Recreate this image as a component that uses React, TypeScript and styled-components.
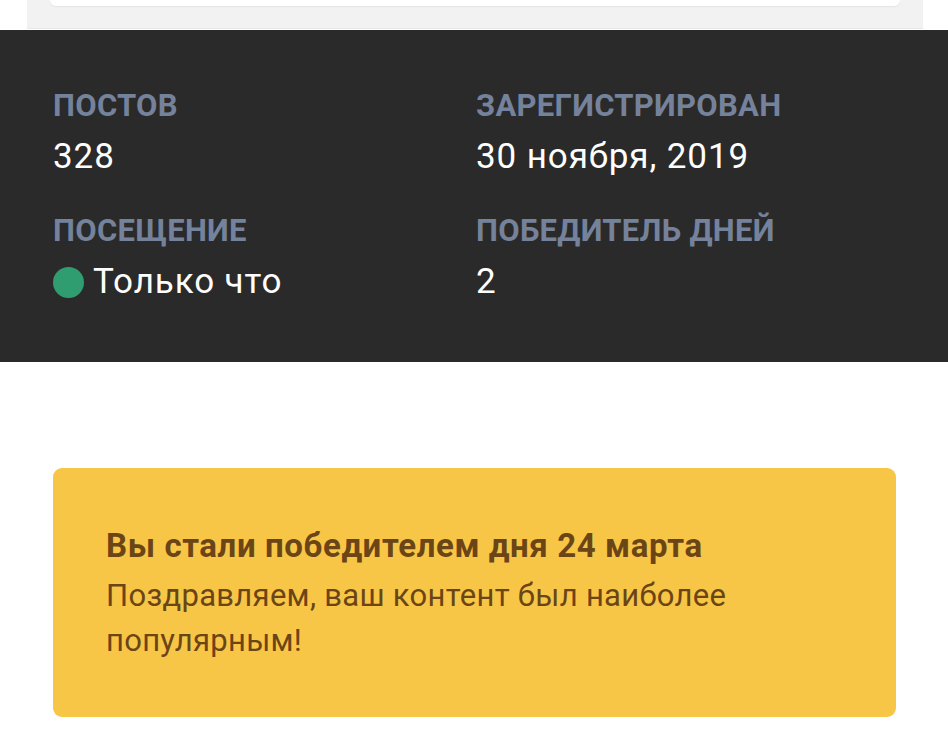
import styled, { createGlobalStyle } from 'styled-components';

const GlobalStyle = createGlobalStyle`
    html, body {
        margin: 0;
        padding: 0;
        background: #ffffff;
        font-family: Roboto, "Noto Sans", "Liberation Sans", sans-serif;
    }
`;

type Stat = { label: string; value: string; online?: boolean };

const stats: Stat[] = [
    { label: 'Постов', value: '328' },
    { label: 'Зарегистрирован', value: '30 ноября, 2019' },
    { label: 'Посещение', value: 'Только что', online: true },
    { label: 'Победитель дней', value: '2' },
];

const App = () => {
    return (
        <Page>
            <GlobalStyle />
            <TopPanel>
                <TopCard />
            </TopPanel>
            <StatsBar>
                {stats.map((item) => (
                    <StatCell key={item.label}>
                        <StatLabel>{item.label}</StatLabel>
                        <StatValue>
                            {item.online && <OnlineDot />}
                            {item.value}
                        </StatValue>
                    </StatCell>
                ))}
            </StatsBar>
            <Content>
                <Notice>
                    <NoticeTitle>Вы стали победителем дня 24 марта</NoticeTitle>
                    <NoticeText>Поздравляем, ваш контент был наиболее популярным!</NoticeText>
                </Notice>
            </Content>
        </Page>
    );
};

export default App;

const Page = styled.div`
    width: 948px;
    min-height: 750px;
    background: #ffffff;
`;

const TopPanel = styled.div`
    margin: 0 25px 0 27px;
    height: 28px;
    background: #f2f2f2;
    border-bottom: 1px solid #e8e8e8;
    display: flex;
    justify-content: center;
    padding: 0 23px;
`;

const TopCard = styled.div`
    flex: 1;
    height: 6px;
    background: #ffffff;
    border-radius: 0 0 7px 7px;
    box-shadow: 0 1px 2px rgba(0, 0, 0, 0.06);
`;

const StatsBar = styled.section`
    margin-top: 1px;
    background: #2a2a2a;
    display: grid;
    grid-template-columns: 423px 1fr;
    row-gap: 32px;
    padding: 56px 53px 58px;
`;

const StatCell = styled.div`
    display: flex;
    flex-direction: column;
    gap: 9px;
`;

const StatLabel = styled.div`
    font-size: 31px;
    line-height: 40px;
    font-weight: 700;
    letter-spacing: 0.3px;
    text-transform: uppercase;
    color: #75829b;
`;

const StatValue = styled.div`
    display: flex;
    align-items: center;
    font-size: 35px;
    line-height: 44px;
    font-weight: 400;
    letter-spacing: 0.9px;
    color: #ffffff;
`;

const OnlineDot = styled.span`
    width: 31px;
    height: 31px;
    border-radius: 50%;
    background: #2f9d6f;
    margin-right: 9px;
    flex-shrink: 0;
`;

const Content = styled.div`
    padding: 106px 52px 34px 53px;
`;

const Notice = styled.div`
    background: #f8c646;
    border-radius: 9px;
    padding: 56px 53px 54px;
    color: #6b4516;
`;

const NoticeTitle = styled.div`
    font-size: 33px;
    line-height: 44px;
    font-weight: 700;
    letter-spacing: 0.6px;
    margin-bottom: 5px;
`;

const NoticeText = styled.div`
    font-size: 31px;
    line-height: 45px;
    font-weight: 400;
    letter-spacing: 0.3px;
`;
